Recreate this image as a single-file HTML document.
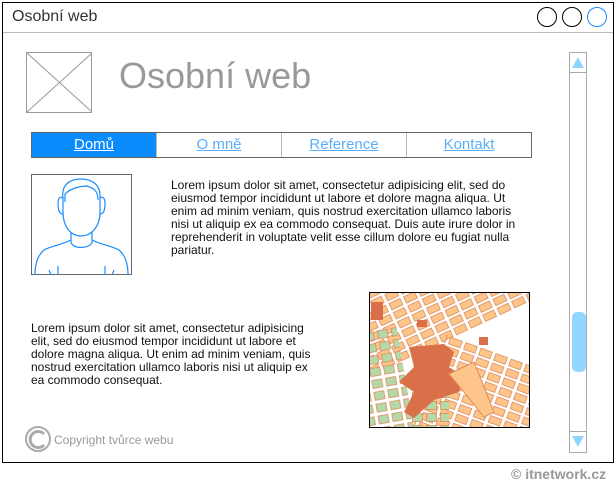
<!DOCTYPE html>
<html><head><meta charset="utf-8"><style>
*{margin:0;padding:0;box-sizing:border-box}
body{width:616px;height:485px;background:#fff;position:relative;overflow:hidden;font-family:"Liberation Sans",sans-serif}
.abs{position:absolute}
.win{left:2px;top:2px;width:612px;height:461px;border:1px solid #000}
.title{left:12px;top:8px;font-size:16px;color:#333}
.hr{left:3px;top:32px;width:610px;height:1px;background:#bbb}
.c{width:20px;height:20px;border-radius:50%;border:1px solid #000;top:7px}
.nav{left:31px;top:132px;width:501px;height:26px;border:1px solid #666;display:flex}
.nav div{flex:1;text-align:center;font-size:15px;line-height:24px;color:#5aaefc;text-decoration:underline;border-left:1px solid #bbb}
.nav div:first-child{border-left:none;background:#0a8cff;color:#fff}
.txt{font-size:12px;line-height:13px;color:#111}
</style></head><body>
<div class="abs win"></div>
<div class="abs title">Osobní web</div>
<div class="abs hr"></div>
<div class="abs c" style="left:537px"></div>
<div class="abs c" style="left:562px"></div>
<div class="abs c" style="left:587px;border-color:#1a8cff"></div>

<svg class="abs" style="left:26px;top:52px" width="67" height="61"><rect x="0.5" y="0.5" width="65" height="60" fill="#fff" stroke="#999"/><path d="M1 1L66 60M66 1L1 60" stroke="#999"/></svg>
<div class="abs" style="left:119px;top:55px;font-size:36px;color:#999">Osobní web</div>

<div class="abs nav"><div>Domů</div><div>O mně</div><div>Reference</div><div>Kontakt</div></div>

<svg class="abs" style="left:31px;top:174px" width="101" height="101">
<rect x="0.5" y="0.5" width="100" height="100" fill="#fff" stroke="#666"/>
<g fill="none" stroke="#1a8cff" stroke-width="1.2">
<path d="M32 24C30 10 40 5 50 5C60 5 70 10 69 24L69 38C69 53 60 62 50 62C40 62 32 53 32 38Z"/>
<path d="M32 24C29 22 27 24 27 30C27 37 29 40 32 40M69 24C72 22 74 24 74 30C74 37 72 40 69 40"/>
<path d="M34 28L34 20C40 14 50 12 56 12C62 14 67 16 67 26"/>
<path d="M40 58L40 69C44 75 56 75 61 69L61 58"/>
<path d="M40 66C30 71 20 72 13 76C6 82 4 92 4 101M61 66C71 71 81 72 88 76C95 82 97 92 97 101"/>
<path d="M18 96L20 101M83 96L81 101M27 92L27 101M74 92L74 101"/>
</g></svg>

<div class="abs txt" style="left:171px;top:179px;width:348px">Lorem ipsum dolor sit amet, consectetur adipisicing elit, sed do eiusmod tempor incididunt ut labore et dolore magna aliqua. Ut enim ad minim veniam, quis nostrud exercitation ullamco laboris nisi ut aliquip ex ea commodo consequat. Duis aute irure dolor in reprehenderit in voluptate velit esse cillum dolore eu fugiat nulla pariatur.</div>

<div class="abs txt" style="left:31px;top:322px;width:290px">Lorem ipsum dolor sit amet, consectetur adipisicing elit, sed do eiusmod tempor incididunt ut labore et dolore magna aliqua. Ut enim ad minim veniam, quis nostrud exercitation ullamco laboris nisi ut aliquip ex ea commodo consequat.</div>

<svg class="abs" style="left:369px;top:292px" width="161" height="136">
<defs>
<pattern id="b" width="16" height="10" patternUnits="userSpaceOnUse"><rect x="1.5" y="1.5" width="12" height="7" fill="#fdc58a" stroke="#e08a5a" stroke-width="0.8"/></pattern>
<pattern id="g" width="14" height="12" patternUnits="userSpaceOnUse"><rect x="1.5" y="1.5" width="10" height="8" fill="#b3d9a8" stroke="#e08a5a" stroke-width="0.8"/></pattern>
</defs>
<rect width="161" height="136" fill="#fff"/>
<g transform="rotate(-25 80 68)"><rect x="-40" y="-40" width="250" height="90" fill="url(#b)"/></g>
<g transform="rotate(20 120 100)"><rect x="60" y="60" width="150" height="120" fill="url(#b)"/></g>
<g transform="rotate(-10 20 80)"><rect x="-10" y="35" width="45" height="110" fill="url(#g)"/></g>
<rect x="40" y="100" width="40" height="36" fill="url(#g)"/>
<path d="M40 55L75 52L85 60L80 75L95 85L90 100L65 108L45 126L35 120L45 100L30 90L45 75Z" fill="#d9704a"/>
<path d="M80 82L105 70L125 120L115 125L95 100Z" fill="#fdc58a" stroke="#e08a5a"/>
<rect x="2" y="10" width="12" height="18" fill="#d9704a"/>
<rect x="48" y="28" width="10" height="7" fill="#d9704a"/>
<rect x="110" y="45" width="9" height="8" fill="#d9704a"/>
<rect x="0.5" y="0.5" width="160" height="135" fill="none" stroke="#000"/>
</svg>

<div class="abs" style="left:569px;top:52px;width:18px;height:401px;border:1px solid #aaa"></div>
<div class="abs" style="left:569px;top:72px;width:18px;height:1px;background:#aaa"></div>
<div class="abs" style="left:569px;top:431px;width:18px;height:1px;background:#aaa"></div>
<div class="abs" style="left:572px;top:57px;width:0;height:0;border-left:6px solid transparent;border-right:6px solid transparent;border-bottom:11px solid #8fd4ff"></div>
<div class="abs" style="left:572px;top:436px;width:0;height:0;border-left:6px solid transparent;border-right:6px solid transparent;border-top:11px solid #8fd4ff"></div>
<div class="abs" style="left:572px;top:312px;width:14px;height:60px;border-radius:5px;background:#93d6ff"></div>

<svg class="abs" style="left:25px;top:426px" width="28" height="28"><circle cx="13" cy="13" r="12" fill="none" stroke="#aaa" stroke-width="2"/><path d="M19 8A8 8 0 1 0 19 19" fill="none" stroke="#aaa" stroke-width="3"/></svg>
<div class="abs" style="left:54px;top:433px;font-size:12px;color:#999">Copyright tvůrce webu</div>
<div class="abs" style="left:511px;top:466px;font-size:14px;font-weight:bold;color:#999">© itnetwork.cz</div>
</body></html>
